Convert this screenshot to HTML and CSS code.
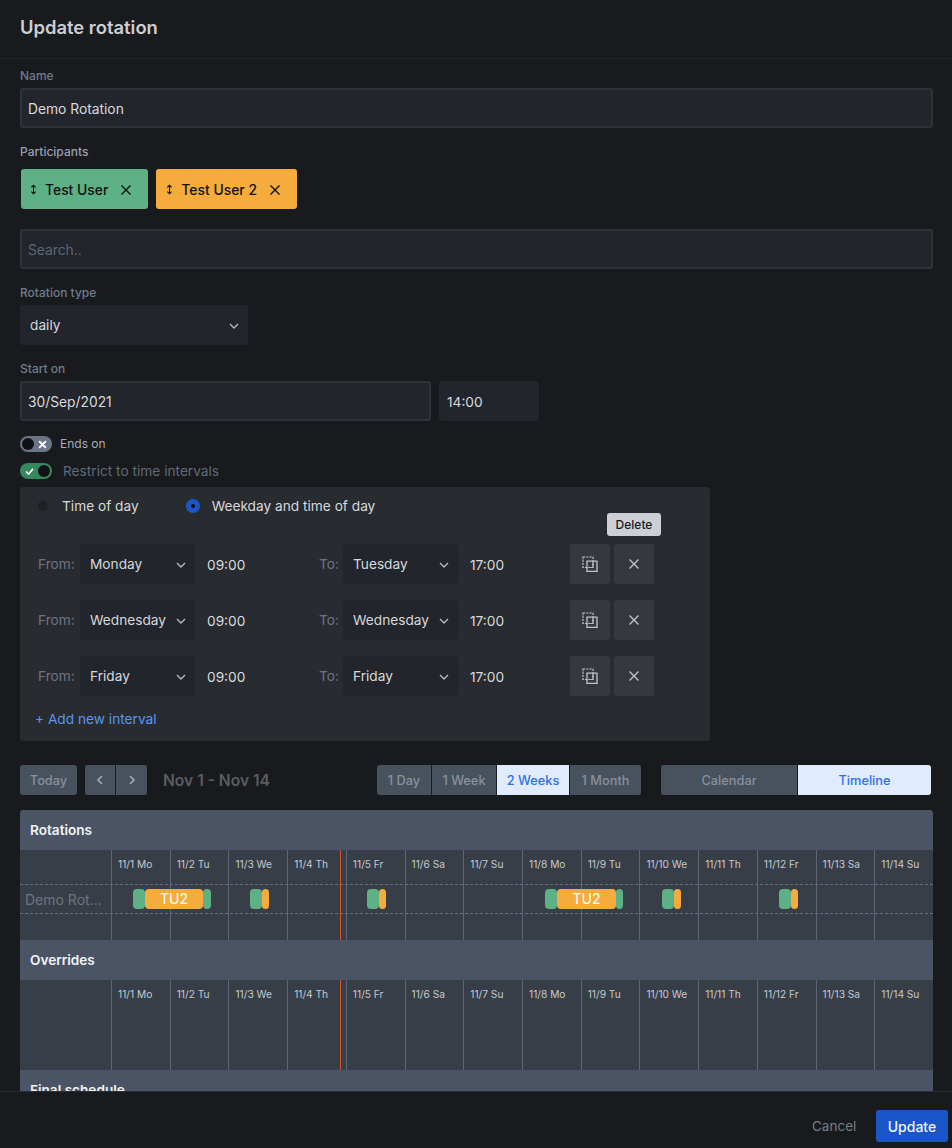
FILE: index.html
```html
<!DOCTYPE html>
<html lang="en">

<head>
    <meta charset="UTF-8">
    <title>Update rotation</title>
    <link rel="stylesheet" href="styles.css">
</head>

<body>
    <svg class="icon-defs" width="0" height="0">
        <symbol id="chevron" viewBox="0 0 12 12"><path d="M2 4l4 4 4-4" fill="none" stroke="currentColor" stroke-width="1.3"/></symbol>
        <symbol id="close" viewBox="0 0 12 12"><path d="M1.5 1.5l9 9M10.5 1.5l-9 9" fill="none" stroke="currentColor" stroke-width="1.4"/></symbol>
        <symbol id="close-bold" viewBox="0 0 12 12"><path d="M1.5 1.5l9 9M10.5 1.5l-9 9" fill="none" stroke="currentColor" stroke-width="2.6"/></symbol>
        <symbol id="drag" viewBox="0 0 8 12"><path d="M4 1v10M1.5 3.5L4 1l2.5 2.5M1.5 8.5L4 11l2.5-2.5" fill="none" stroke="currentColor" stroke-width="1.2"/></symbol>
        <symbol id="copy" viewBox="0 0 16 16">
            <path d="M1 1h10v10.5H1z" fill="none" stroke="currentColor" stroke-width="1.2" stroke-dasharray="2.2 1.1"/>
            <path d="M5 5.2h10v10.2H5z" fill="none" stroke="currentColor" stroke-width="1.3"/>
            <path d="M11 5.5v6H8.5" fill="none" stroke="currentColor" stroke-width="1.1"/>
        </symbol>
    </svg>

    <div class="modal">
        <header class="modal-header">Update rotation</header>

        <main class="modal-body">
            <label class="field-label" for="name">Name</label>
            <input class="text-input" id="name" type="text" value="Demo Rotation">

            <div class="field-label field-label-light">Participants</div>
            <div class="tags">
                <div class="tag tag-green">
                    <svg class="tag-drag"><use href="#drag"/></svg>
                    <span>Test User</span>
                    <svg class="tag-close"><use href="#close"/></svg>
                </div>
                <div class="tag tag-orange">
                    <svg class="tag-drag"><use href="#drag"/></svg>
                    <span>Test User 2</span>
                    <svg class="tag-close"><use href="#close"/></svg>
                </div>
            </div>
            <input class="text-input search-input" type="text" placeholder="Search..">

            <div class="field-label">Rotation type</div>
            <div class="select select-type">daily<svg class="chevron"><use href="#chevron"/></svg></div>

            <div class="field-label">Start on</div>
            <div class="start-row">
                <input class="text-input date-input" type="text" value="30/Sep/2021">
                <div class="time-box">14:00</div>
            </div>

            <div class="switch-row">
                <div class="switch switch-off"><span class="knob"></span><svg class="switch-x"><use href="#close-bold"/></svg></div>
                <span class="switch-label">Ends on</span>
            </div>
            <div class="switch-row switch-row-second">
                <div class="switch switch-on">
                    <svg class="switch-check" viewBox="0 0 10 8"><path d="M1 4l3 3 5-6" fill="none" stroke="currentColor" stroke-width="1.8"/></svg>
                    <span class="knob"></span>
                </div>
                <span class="restrict-label">Restrict to time intervals</span>
            </div>

            <section class="interval-panel">
                <div class="radios">
                    <span class="radio"></span><span class="radio-text radio-text-first">Time of day</span>
                    <span class="radio radio-checked"></span><span class="radio-text">Weekday and time of day</span>
                </div>
                <div class="tooltip">Delete</div>

                <div class="interval-row">
                    <span class="muted">From:</span>
                    <div class="select">Monday<svg class="chevron"><use href="#chevron"/></svg></div>
                    <span class="time">09:00</span>
                    <span class="muted">To:</span>
                    <div class="select">Tuesday<svg class="chevron"><use href="#chevron"/></svg></div>
                    <span class="time">17:00</span>
                    <button class="icon-btn"><svg class="copy-icon"><use href="#copy"/></svg></button>
                    <button class="icon-btn"><svg class="close-icon"><use href="#close"/></svg></button>
                </div>
                <div class="interval-row">
                    <span class="muted">From:</span>
                    <div class="select">Wednesday<svg class="chevron"><use href="#chevron"/></svg></div>
                    <span class="time">09:00</span>
                    <span class="muted">To:</span>
                    <div class="select">Wednesday<svg class="chevron"><use href="#chevron"/></svg></div>
                    <span class="time">17:00</span>
                    <button class="icon-btn"><svg class="copy-icon"><use href="#copy"/></svg></button>
                    <button class="icon-btn"><svg class="close-icon"><use href="#close"/></svg></button>
                </div>
                <div class="interval-row">
                    <span class="muted">From:</span>
                    <div class="select">Friday<svg class="chevron"><use href="#chevron"/></svg></div>
                    <span class="time">09:00</span>
                    <span class="muted">To:</span>
                    <div class="select">Friday<svg class="chevron"><use href="#chevron"/></svg></div>
                    <span class="time">17:00</span>
                    <button class="icon-btn"><svg class="copy-icon"><use href="#copy"/></svg></button>
                    <button class="icon-btn"><svg class="close-icon"><use href="#close"/></svg></button>
                </div>

                <div class="add-interval">+ Add new interval</div>
            </section>

            <div class="toolbar">
                <button class="tool-btn today-btn">Today</button>
                <div class="btn-group nav-group">
                    <button class="tool-btn nav-btn"><svg class="nav-icon" viewBox="0 0 8 12"><path d="M6 2L2 6l4 4" fill="none" stroke="currentColor" stroke-width="1.6"/></svg></button>
                    <button class="tool-btn nav-btn"><svg class="nav-icon" viewBox="0 0 8 12"><path d="M2 2l4 4-4 4" fill="none" stroke="currentColor" stroke-width="1.6"/></svg></button>
                </div>
                <div class="date-range">Nov 1 - Nov 14</div>
                <div class="btn-group range-group">
                    <button class="tool-btn range-day">1 Day</button>
                    <button class="tool-btn range-week">1 Week</button>
                    <button class="tool-btn range-2week active">2 Weeks</button>
                    <button class="tool-btn range-month">1 Month</button>
                </div>
                <div class="btn-group view-group">
                    <button class="tool-btn view-calendar">Calendar</button>
                    <button class="tool-btn view-timeline active">Timeline</button>
                </div>
            </div>

            <section class="schedule">
                <div class="schedule-title">Rotations</div>
                <div class="timeline">
                    <div class="day-grid">
                        <div class="name-cell"></div>
                        <div class="day">11/1 Mo</div><div class="day">11/2 Tu</div><div class="day">11/3 We</div><div class="day">11/4 Th</div><div class="day">11/5 Fr</div><div class="day">11/6 Sa</div><div class="day">11/7 Su</div>
                        <div class="day">11/8 Mo</div><div class="day">11/9 Tu</div><div class="day">11/10 We</div><div class="day">11/11 Th</div><div class="day">11/12 Fr</div><div class="day">11/13 Sa</div><div class="day">11/14 Su</div>
                    </div>
                    <div class="lane">
                        <div class="lane-name">Demo Rot...</div>
                        <div class="bar bar-green" style="left:113px;width:12px"></div>
                        <div class="bar bar-orange" style="left:125px;width:58px">TU2</div>
                        <div class="bar bar-green" style="left:183px;width:8px"></div>
                        <div class="bar bar-green" style="left:230px;width:12px"></div>
                        <div class="bar bar-orange" style="left:242px;width:7px"></div>
                        <div class="bar bar-green" style="left:347px;width:12px"></div>
                        <div class="bar bar-orange" style="left:359px;width:7px"></div>
                        <div class="bar bar-green" style="left:525px;width:12px"></div>
                        <div class="bar bar-orange" style="left:537px;width:59px">TU2</div>
                        <div class="bar bar-green" style="left:596px;width:7px"></div>
                        <div class="bar bar-green" style="left:642px;width:12px"></div>
                        <div class="bar bar-orange" style="left:654px;width:7px"></div>
                        <div class="bar bar-green" style="left:759px;width:12px"></div>
                        <div class="bar bar-orange" style="left:771px;width:7px"></div>
                    </div>
                    <div class="now-line"></div>
                </div>

                <div class="schedule-title">Overrides</div>
                <div class="timeline">
                    <div class="day-grid">
                        <div class="name-cell"></div>
                        <div class="day">11/1 Mo</div><div class="day">11/2 Tu</div><div class="day">11/3 We</div><div class="day">11/4 Th</div><div class="day">11/5 Fr</div><div class="day">11/6 Sa</div><div class="day">11/7 Su</div>
                        <div class="day">11/8 Mo</div><div class="day">11/9 Tu</div><div class="day">11/10 We</div><div class="day">11/11 Th</div><div class="day">11/12 Fr</div><div class="day">11/13 Sa</div><div class="day">11/14 Su</div>
                    </div>
                    <div class="now-line"></div>
                </div>

                <div class="schedule-title">Final schedule</div>
            </section>
        </main>

        <footer class="modal-footer">
            <button class="cancel-btn">Cancel</button>
            <button class="update-btn">Update</button>
        </footer>
    </div>
</body>

</html>
```

FILE: styles.css
```css
* {
    box-sizing: border-box;
}

html, body {
    margin: 0;
    height: 100%;
    overflow: hidden;
}

body {
    background: #181a1d;
    color: #d8d9dc;
    font-family: Inter, "Liberation Sans", sans-serif;
    font-size: 13.7px;
}

button {
    font-family: inherit;
    border: none;
    padding: 0;
}

.icon-defs {
    position: absolute;
}

.modal {
    display: flex;
    flex-direction: column;
    height: 1148px;
}

.modal-header {
    flex: none;
    height: 59px;
    padding: 16px 20px 0;
    font-size: 18.4px;
    line-height: 22px;
    font-weight: 600;
    color: #ccced3;
    border-bottom: 1px solid #22252a;
}

.modal-body {
    flex: 1;
    min-height: 0;
    overflow: hidden;
    padding: 8px 19px 0 20px;
}

.modal-footer {
    flex: none;
    height: 57px;
    background: #181a1d;
    border-top: 1px solid #2a2d33;
    padding: 18px 4px 0 0;
    display: flex;
    justify-content: flex-end;
    align-items: flex-start;
}

.field-label {
    display: block;
    height: 16px;
    margin-bottom: 5px;
    font-size: 12px;
    line-height: 18px;
    font-weight: 500;
    color: #707c90;
}

.field-label-light {
    margin-top: 15px;
    margin-bottom: 10px;
    color: #98a0ae;
}

.text-input + .field-label,
.select + .field-label {
    margin-top: 15px;
}

.text-input {
    display: block;
    width: 100%;
    height: 40px;
    padding: 1px 6px 0;
    background: #22252b;
    border: 2px solid #2e3239;
    border-radius: 3px;
    color: #d8d9dc;
    font-family: inherit;
    font-size: 13.8px;
    outline: none;
}

.text-input::placeholder {
    color: #5d6675;
}

.search-input {
    margin-top: 20px;
}

.tags {
    display: flex;
    gap: 8px;
    margin-left: 1px;
}

.tag {
    display: flex;
    align-items: center;
    height: 40px;
    padding: 1px 16px 0 9px;
    border-radius: 3px;
    color: #101214;
    font-size: 13.9px;
    font-weight: 500;
}

.tag-green {
    background: #5db185;
}

.tag-orange {
    background: #f5ac3d;
    padding: 1px 16px 0 10px;
}

.tag-drag {
    width: 7px;
    height: 11px;
    margin-right: 8px;
}

.tag-close {
    width: 12px;
    height: 12px;
    margin-left: 12px;
}

.select {
    display: flex;
    align-items: center;
    justify-content: space-between;
    width: 115px;
    height: 40px;
    padding: 0 8px 0 10px;
    background: #22252b;
    border-radius: 3px;
    color: #d8d9dc;
    white-space: nowrap;
}

.select-type {
    width: 228px;
}

.chevron {
    flex: none;
    width: 12px;
    height: 12px;
    margin-top: 1px;
    color: #b8bbc2;
}

.start-row {
    display: flex;
    gap: 8px;
}

.date-input {
    width: 411px;
}

.time-box {
    width: 100px;
    height: 40px;
    padding-left: 8px;
    line-height: 43px;
    background: #22252b;
    border-radius: 3px;
}

.switch-row {
    display: flex;
    align-items: center;
    height: 16px;
    margin-top: 15px;
}

.switch-row-second {
    margin-top: 11px;
}

.switch {
    display: flex;
    align-items: center;
    justify-content: space-between;
    width: 32px;
    height: 16px;
    border-radius: 8px;
    padding: 2px;
}

.switch-off {
    background: #6b7587;
    padding-right: 5px;
}

.switch-on {
    background: #36895f;
    padding-left: 5px;
}

.knob {
    width: 12px;
    height: 12px;
    border-radius: 50%;
    background: #101114;
}

.switch-x {
    width: 9px;
    height: 9px;
    color: #fff;
}

.switch-check {
    width: 9px;
    height: 7px;
    color: #fff;
}

.switch-label {
    margin-left: 8px;
    padding-bottom: 2px;
    font-size: 12px;
    color: #a8abb2;
}

.restrict-label {
    margin-left: 11px;
    color: #5f6a7c;
}

.interval-panel {
    position: relative;
    width: 690px;
    height: 254px;
    margin-top: 8px;
    padding: 9px 18px 0;
    background: #282b30;
    border-radius: 3px;
}

.radios {
    display: flex;
    align-items: center;
    height: 20px;
    margin-bottom: 28px;
}

.radio {
    width: 10px;
    height: 10px;
    border-radius: 50%;
    background: #1e2024;
}

.radio-checked {
    position: relative;
    width: 14px;
    height: 14px;
    background: #1a56c8;
}

.radio-checked::after {
    content: "";
    position: absolute;
    left: 5px;
    top: 5px;
    width: 4px;
    height: 4px;
    border-radius: 50%;
    background: #0c0e12;
}

.radio-text {
    margin-left: 12px;
}

.radio-text-first {
    margin-left: 14px;
    margin-right: 47px;
}

.tooltip {
    position: absolute;
    left: 587px;
    top: 26px;
    width: 54px;
    height: 23px;
    background: #ccd0d6;
    border-radius: 3px;
    color: #16181c;
    font-size: 12px;
    font-weight: 500;
    line-height: 23px;
    text-align: center;
}

.interval-row {
    display: grid;
    grid-template-columns: 42px 115px 124px 24px 115px 112px 40px 40px;
    align-items: center;
    height: 40px;
    margin-bottom: 16px;
}

.interval-row .icon-btn:last-child {
    margin-left: 4px;
}

.muted {
    color: #6d7480;
}

.time {
    padding-left: 12px;
    padding-top: 1px;
}

.icon-btn {
    display: flex;
    align-items: center;
    justify-content: center;
    width: 40px;
    height: 40px;
    background: #35383e;
    border-radius: 3px;
    color: #c3c5c9;
}

.copy-icon {
    width: 16px;
    height: 16px;
}

.close-icon {
    width: 12px;
    height: 12px;
}

.add-interval {
    margin-top: -1px;
    margin-left: -3px;
    color: #5b96f2;
}

.toolbar {
    display: flex;
    align-items: center;
    height: 30px;
    margin-top: 24px;
    padding-right: 2px;
}

.tool-btn {
    height: 30px;
    background: #48525f;
    color: #88909c;
    font-size: 12.8px;
    font-weight: 500;
}

.tool-btn.active {
    background: #e0ebfd;
    color: #2f70e8;
}

.today-btn {
    width: 57px;
    border-radius: 3px;
}

.btn-group {
    display: flex;
    gap: 1px;
    border-radius: 3px;
    overflow: hidden;
}

.nav-group {
    margin-left: 8px;
}

.nav-btn {
    width: 30px;
    display: flex;
    align-items: center;
    justify-content: center;
}

.nav-btn + .nav-btn {
    width: 31px;
}

.nav-icon {
    width: 8px;
    height: 12px;
    color: #a4abb6;
}

.date-range {
    margin-left: 16px;
    font-size: 15.6px;
    font-weight: 600;
    color: #5a5d62;
}

.range-group {
    margin-left: auto;
}

.range-day {
    width: 54px;
}

.range-week {
    width: 64px;
}

.range-2week {
    width: 72px;
}

.range-month {
    width: 71px;
}

.view-group {
    margin-left: 20px;
}

.view-calendar {
    width: 136px;
}

.view-timeline {
    width: 133px;
}

.schedule {
    margin-top: 15px;
    background: #4a5464;
    border-radius: 3px 3px 0 0;
}

.schedule-title {
    height: 40px;
    padding-left: 10px;
    font-size: 13.6px;
    font-weight: 600;
    line-height: 40px;
    color: #f2f3f5;
}

.timeline {
    position: relative;
    height: 90px;
    background: #383e48;
}

.day-grid {
    display: grid;
    grid-template-columns: 91px repeat(14, 1fr);
    height: 100%;
}

.day {
    border-left: 1px solid #5d6577;
    padding: 8px 0 0 6px;
    font-size: 10.2px;
    line-height: 13px;
    color: #c6c9ce;
    white-space: nowrap;
}

.lane {
    position: absolute;
    left: 0;
    right: 0;
    top: 34px;
    height: 30px;
    border-top: 1px dashed #666e80;
    border-bottom: 1px dashed #666e80;
}

.lane-name {
    padding: 6px 0 0 5px;
    font-size: 14px;
    line-height: 17px;
    color: #6f747c;
}

.bar {
    position: absolute;
    top: 4px;
    height: 20px;
    border-radius: 4px;
    color: #fff;
    font-size: 14px;
    line-height: 20px;
    text-align: center;
}

.bar-green {
    background: #5db185;
}

.bar-orange {
    background: #f5ac3d;
}

.now-line {
    position: absolute;
    left: 320px;
    top: 0;
    bottom: 0;
    width: 1px;
    background: #d4562f;
}

.cancel-btn {
    width: 44px;
    height: 32px;
    margin-right: 20px;
    background: none;
    color: #767d89;
    font-size: 13.5px;
}

.update-btn {
    width: 72px;
    height: 32px;
    background: #1a56c8;
    border-radius: 3px;
    color: #f0f3fa;
    font-size: 14px;
    font-weight: 500;
}
```
